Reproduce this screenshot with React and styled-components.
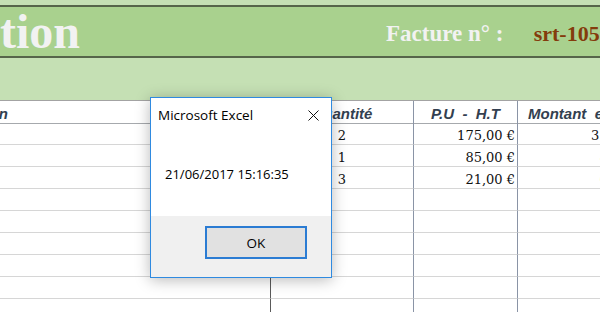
import React from "react";
import styled, { createGlobalStyle } from "styled-components";

const Global = createGlobalStyle`
  html, body { margin: 0; padding: 0; background: #ffffff; }
  body { width: 600px; height: 312px; overflow: hidden; }
  #root { width: 600px; height: 312px; }
`;

const Sheet = styled.div`
  position: relative;
  width: 600px;
  height: 312px;
  overflow: hidden;
  background: #ffffff;
  display: flex;
  flex-direction: column;
`;

const TopStrip = styled.div`
  height: 5px;
  background: #c5e0b4;
  flex: none;
`;

const TitleBand = styled.div`
  flex: none;
  height: 49px;
  background: #a9d18e;
  border-top: 2px solid #56654a;
  border-bottom: 2px solid #56654a;
  display: grid;
  grid-template-columns: 386px auto auto;
  align-items: start;
  white-space: nowrap;
  overflow: hidden;
  font-family: "Liberation Serif", "Times New Roman", serif;
  font-weight: bold;
`;

const BigTitle = styled.div`
  font-size: 48px;
  line-height: 48px;
  color: #f2f2f2;
  margin-top: 1px;
`;

const InvoiceLabel = styled.div`
  font-size: 23px;
  line-height: 23px;
  color: #f2f2f2;
  margin-top: 15px;
`;

const InvoiceNumber = styled.div`
  font-size: 22px;
  line-height: 22px;
  color: #843c0c;
  margin-top: 16px;
  margin-left: 30px;
`;

const SubBand = styled.div`
  flex: none;
  height: 42px;
  background: #c5e0b4;
  border-bottom: 1px solid #a3a3a3;
`;

const Table = styled.div`
  display: grid;
  grid-template-columns: 271px 143px 104px 134px;
  grid-auto-rows: 22px;
  width: 652px;
`;

const HeadCell = styled.div`
  height: 23px;
  box-sizing: border-box;
  border-bottom: 1px solid #a6a9ad;
  border-right: 1px solid ${(p) => (p.$dark ? "#5a5a5a" : "#8a94a6")};
  display: flex;
  align-items: center;
  justify-content: ${(p) => (p.$start ? "flex-start" : "center")};
  padding: 2px 0 0 ${(p) => p.$padLeft || 0}px;
  font-family: "Liberation Sans", Arial, sans-serif;
  font-weight: bold;
  font-style: italic;
  font-size: 15px;
  color: #333f50;
  white-space: pre;
  overflow: hidden;
`;

const HeadText = styled.span`
  margin-left: ${(p) => p.$shift || 0}px;
`;

const Cell = styled.div`
  box-sizing: border-box;
  border-bottom: 1px solid #d6d6d6;
  border-right: 1px solid ${(p) => (p.$dark ? "#5a5a5a" : "#8a94a6")};
  display: flex;
  align-items: center;
  justify-content: ${(p) =>
    p.$align === "right" ? "flex-end" : p.$align === "center" ? "center" : "flex-start"};
  padding: 4px 2px 0 2px;
  font-family: "DejaVu Serif", "Liberation Serif", serif;
  font-size: 13px;
  color: #111;
  white-space: nowrap;
`;

const Row = styled.div`
  display: contents;
`;

const Dialog = styled.div`
  position: absolute;
  left: 150px;
  top: 97px;
  width: 182px;
  height: 181px;
  box-sizing: border-box;
  border: 1px solid #2f8ae0;
  background: #ffffff;
  box-shadow: 0 2px 14px rgba(0, 0, 0, 0.28);
  display: flex;
  flex-direction: column;
  font-family: "Segoe UI", "Open Sans", "Noto Sans", sans-serif;
  color: #000;
`;

const DialogTitleBar = styled.div`
  height: 35px;
  flex: none;
  display: flex;
  align-items: flex-start;
  justify-content: space-between;
  padding: 8px 12px 0 7px;
  box-sizing: border-box;
`;

const DialogTitle = styled.div`
  font-size: 13.5px;
  line-height: 18px;
`;

const CloseIcon = styled.svg`
  margin-top: 4px;
  width: 11px;
  height: 11px;
`;

const DialogBody = styled.div`
  flex: 1;
  padding: 32px 0 0 14px;
  font-size: 13px;
  line-height: 18px;
`;

const DialogFooter = styled.div`
  flex: none;
  height: 61px;
  background: #f0f0f0;
  display: flex;
  justify-content: flex-end;
  align-items: flex-start;
  padding: 10px 24px 0 0;
  box-sizing: border-box;
`;

const Button = styled.div`
  width: 102px;
  height: 33px;
  box-sizing: border-box;
  border: 2px solid #2b7cd3;
  background: #e1e1e1;
  display: flex;
  align-items: center;
  justify-content: center;
  font-size: 13.5px;
`;

const rows = [
  ["", "2", "175,00 €", "350,00 €"],
  ["", "1", "85,00 €", "85,00 €"],
  ["", "3", "21,00 €", "63,00 €"],
  ["", "", "", ""],
  ["", "", "", ""],
  ["", "", "", ""],
  ["", "", "", ""],
  ["", "", "", ""],
  ["", "", "", ""],
];

export default function App() {
  return (
    <>
      <Global />
      <Sheet>
        <TopStrip />
        <TitleBand>
          <BigTitle>tion</BigTitle>
          <InvoiceLabel>Facture n° :</InvoiceLabel>
          <InvoiceNumber>srt-105</InvoiceNumber>
        </TitleBand>
        <SubBand />
        <Table>
          <Row>
            <HeadCell $dark $start>
              <HeadText $shift={-78}>Désignation</HeadText>
            </HeadCell>
            <HeadCell>Quantité</HeadCell>
            <HeadCell>P.U  -  H.T</HeadCell>
            <HeadCell $start $padLeft={10}>Montant  en  €</HeadCell>
          </Row>
          {rows.map((r, i) => (
            <Row key={i}>
              <Cell $dark>{r[0]}</Cell>
              <Cell $align="center">{r[1]}</Cell>
              <Cell $align="right">{r[2]}</Cell>
              <Cell $align="right">{r[3]}</Cell>
            </Row>
          ))}
        </Table>
        <Dialog>
          <DialogTitleBar>
            <DialogTitle>Microsoft Excel</DialogTitle>
            <CloseIcon viewBox="0 0 11 11">
              <path d="M0.5 0.5 L10.5 10.5 M10.5 0.5 L0.5 10.5" stroke="#111" strokeWidth="1" fill="none" />
            </CloseIcon>
          </DialogTitleBar>
          <DialogBody>21/06/2017 15:16:35</DialogBody>
          <DialogFooter>
            <Button>OK</Button>
          </DialogFooter>
        </Dialog>
      </Sheet>
    </>
  );
}
